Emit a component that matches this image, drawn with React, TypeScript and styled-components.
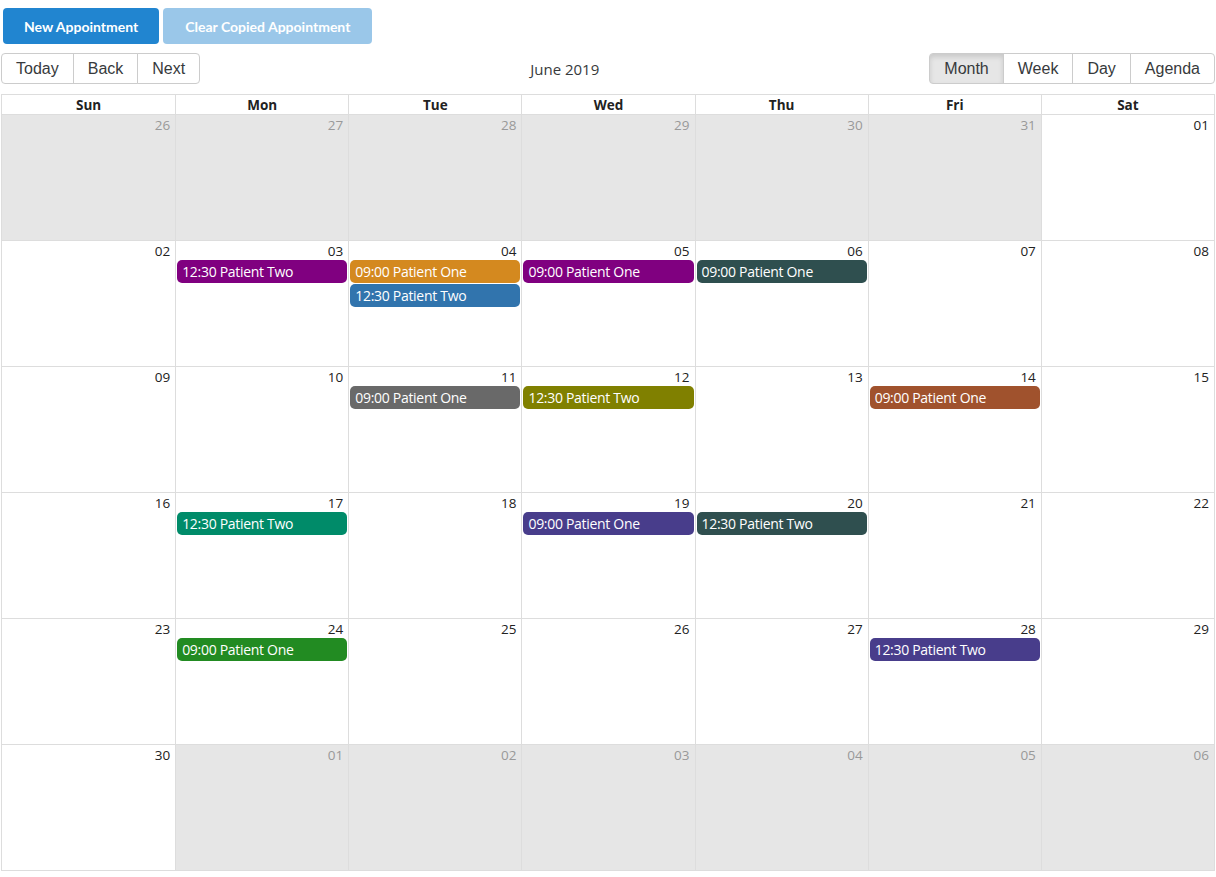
import React from 'react';
import styled, { createGlobalStyle, css } from 'styled-components';

const GlobalStyle = createGlobalStyle`
  body {
    margin: 0;
    background: #fff;
    font-family: "Open Sans", "Noto Sans", sans-serif;
    color: #373a3c;
  }
`;

const Page = styled.div`
  padding: 8px 1px 0 1px;
`;

const ActionBar = styled.div`
  display: flex;
  gap: 4px;
  padding-left: 2px;
  margin-bottom: 9px;
`;

const ActionButton = styled.button<{ disabled?: boolean }>`
  font-family: Lato, "Liberation Sans", sans-serif;
  font-weight: 700;
  font-size: 14px;
  color: #fff;
  background: #2185d0;
  border: none;
  border-radius: 4px;
  height: 36px;
  padding: 0 21px;
  cursor: pointer;
  ${(p) =>
    p.disabled &&
    css`
      opacity: 0.45;
      cursor: default;
      padding: 0 22px;
    `}
`;

const Toolbar = styled.div`
  display: flex;
  align-items: center;
  margin-bottom: 10px;
  font-size: 16px;
`;

const Group = styled.div`
  display: flex;
`;

const ToolButton = styled.button<{ active?: boolean }>`
  font-family: "Liberation Sans", Arial, sans-serif;
  font-size: 16px;
  color: #373a3c;
  background: ${(p) => (p.active ? '#e6e6e6' : '#fff')};
  box-shadow: ${(p) => (p.active ? 'inset 0 3px 5px rgba(0,0,0,.125)' : 'none')};
  border: 1px solid #ccc;
  padding: 6px 14px 5px;
  line-height: normal;
  margin: 0;
  cursor: pointer;
  &:not(:first-child) {
    margin-left: -1px;
  }
  &:first-child {
    border-radius: 4px 0 0 4px;
  }
  &:last-child {
    border-radius: 0 4px 4px 0;
  }
`;

const Label = styled.span`
  flex: 1;
  text-align: center;
  padding: 0 10px;
  font-size: 15px;
  color: #373a3c;
`;

const Month = styled.div`
  border: 1px solid #ddd;
  display: flex;
  flex-direction: column;
`;

const HeaderRow = styled.div`
  display: grid;
  grid-template-columns: repeat(7, 1fr);
`;

const HeaderCell = styled.div`
  font-weight: 700;
  font-size: 13.5px;
  text-align: center;
  height: 19px;
  line-height: 20px;
  color: #222;
  & + & {
    border-left: 1px solid #ddd;
  }
`;

const WeekRow = styled.div`
  display: grid;
  grid-template-columns: repeat(7, 1fr);
  border-top: 1px solid #ddd;
  height: 125px;
`;

const DayCell = styled.div<{ off?: boolean }>`
  background: ${(p) => (p.off ? '#e6e6e6' : '#fff')};
  display: flex;
  flex-direction: column;
  min-width: 0;
  & + & {
    border-left: 1px solid #ddd;
  }
`;

const DateNum = styled.div<{ off?: boolean }>`
  text-align: right;
  padding: 1px 5px 0 0;
  height: 18px;
  font-size: 13.5px;
  line-height: 18px;
  color: ${(p) => (p.off ? '#999' : '#222')};
`;

const Event = styled.div<{ color: string }>`
  background: ${(p) => p.color};
  color: #fff;
  border-radius: 5px;
  margin: 0 1px 1px 1px;
  padding: 2px 5px;
  font-size: 14px;
  letter-spacing: -0.3px;
  line-height: 19px;
  white-space: nowrap;
  overflow: hidden;
  text-overflow: ellipsis;
`;

type Ev = { time: string; name: string; color: string };
type Day = { n: string; off?: boolean; events?: Ev[] };

const one = (color: string): Ev => ({ time: '09:00', name: 'Patient One', color });
const two = (color: string): Ev => ({ time: '12:30', name: 'Patient Two', color });

const weeks: Day[][] = [
  [
    { n: '26', off: true },
    { n: '27', off: true },
    { n: '28', off: true },
    { n: '29', off: true },
    { n: '30', off: true },
    { n: '31', off: true },
    { n: '01' },
  ],
  [
    { n: '02' },
    { n: '03', events: [two('#800080')] },
    { n: '04', events: [one('#d4891f'), two('#3174ad')] },
    { n: '05', events: [one('#800080')] },
    { n: '06', events: [one('#2f4f4f')] },
    { n: '07' },
    { n: '08' },
  ],
  [
    { n: '09' },
    { n: '10' },
    { n: '11', events: [one('#696969')] },
    { n: '12', events: [two('#808000')] },
    { n: '13' },
    { n: '14', events: [one('#a0522d')] },
    { n: '15' },
  ],
  [
    { n: '16' },
    { n: '17', events: [two('#008b69')] },
    { n: '18' },
    { n: '19', events: [one('#483d8b')] },
    { n: '20', events: [two('#2f4f4f')] },
    { n: '21' },
    { n: '22' },
  ],
  [
    { n: '23' },
    { n: '24', events: [one('#228b22')] },
    { n: '25' },
    { n: '26' },
    { n: '27' },
    { n: '28', events: [two('#483d8b')] },
    { n: '29' },
  ],
  [
    { n: '30' },
    { n: '01', off: true },
    { n: '02', off: true },
    { n: '03', off: true },
    { n: '04', off: true },
    { n: '05', off: true },
    { n: '06', off: true },
  ],
];

const dayNames = ['Sun', 'Mon', 'Tue', 'Wed', 'Thu', 'Fri', 'Sat'];

export default function App() {
  return (
    <Page>
      <GlobalStyle />
      <ActionBar>
        <ActionButton>New Appointment</ActionButton>
        <ActionButton disabled>Clear Copied Appointment</ActionButton>
      </ActionBar>
      <Toolbar>
        <Group>
          <ToolButton>Today</ToolButton>
          <ToolButton>Back</ToolButton>
          <ToolButton>Next</ToolButton>
        </Group>
        <Label>June 2019</Label>
        <Group>
          <ToolButton active>Month</ToolButton>
          <ToolButton>Week</ToolButton>
          <ToolButton>Day</ToolButton>
          <ToolButton>Agenda</ToolButton>
        </Group>
      </Toolbar>
      <Month>
        <HeaderRow>
          {dayNames.map((d) => (
            <HeaderCell key={d}>{d}</HeaderCell>
          ))}
        </HeaderRow>
        {weeks.map((week, i) => (
          <WeekRow key={i}>
            {week.map((day, j) => (
              <DayCell key={j} off={day.off}>
                <DateNum off={day.off}>{day.n}</DateNum>
                {day.events?.map((ev, k) => (
                  <Event key={k} color={ev.color}>
                    {ev.time} {ev.name}
                  </Event>
                ))}
              </DayCell>
            ))}
          </WeekRow>
        ))}
      </Month>
    </Page>
  );
}
